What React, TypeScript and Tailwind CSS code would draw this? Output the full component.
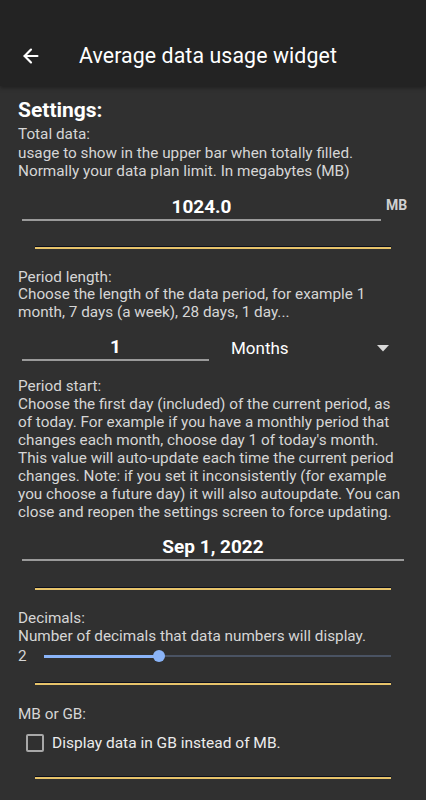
import { ArrowLeft } from "lucide-react";

function Divider() {
    return <div className="mx-[17px] h-[3px] border-t border-[#0b0f1e] bg-[#e6c36a]"></div>;
}

export default function App() {
    return (
        <div className="w-[426px] h-[800px] overflow-hidden bg-[#303030] text-[#d6d6d6] font-[Roboto,sans-serif]">
            {/* Top bar */}
            <header className="h-[86px] bg-[#232323] flex items-center pt-[26px] shadow-[0_2px_4px_rgba(0,0,0,0.35)]">
                <ArrowLeft className="ml-[20px] w-[22px] h-[22px] text-white" strokeWidth={2.4} />
                <h1 className="ml-[37px] text-[21.3px] text-white tracking-[0.1px]">Average data usage widget</h1>
            </header>

            <main className="px-[18px]">
                <h2 className="mt-[11px] text-[21px] leading-[26px] font-bold text-white">Settings:</h2>

                {/* Total data */}
                <p className="mt-[2px] text-[15.3px] leading-[18.5px]">
                    Total data:<br />
                    usage to show in the upper bar when totally filled.<br />
                    Normally your data plan limit. In megabytes (MB)
                </p>
                <div className="mt-[13px] flex items-center">
                    <div className="ml-[4px] w-[359px] border-b-2 border-[#9a9a9a] text-center text-[19px] leading-[25px] font-bold text-white">
                        1024.0
                    </div>
                    <span className="ml-[5px] -mt-[3px] text-[14px] font-bold text-[#cfcfcf]">MB</span>
                </div>
                <div className="mt-[25px]"><Divider /></div>

                {/* Period length */}
                <p className="mt-[20px] text-[15.3px] leading-[17.5px]">
                    Period length:<br />
                    Choose the length of the data period, for example 1<br />
                    month, 7 days (a week), 28 days, 1 day...
                </p>
                <div className="mt-[13px] flex items-end">
                    <div className="ml-[4px] w-[187px] border-b-2 border-[#9a9a9a] text-center text-[19px] leading-[25px] font-bold text-white">
                        1
                    </div>
                    <div className="ml-[22px] flex-1 flex items-center justify-between pb-[1px]">
                        <span className="text-[17px] leading-[24px] text-white">Months</span>
                        <svg width="12" height="7" viewBox="0 0 12 7" className="mr-[19px]">
                            <path d="M0 0 L12 0 L6 6.5 Z" fill="#d8d8d8" />
                        </svg>
                    </div>
                </div>

                {/* Period start */}
                <p className="mt-[16px] text-[15.3px] leading-[18px]">
                    Period start:<br />
                    Choose the first day (included) of the current period, as<br />
                    of today. For example if you have a monthly period that<br />
                    changes each month, choose day 1 of today's month.<br />
                    This value will auto-update each time the current period<br />
                    changes. Note: if you set it inconsistently (for example<br />
                    you choose a future day) it will also autoupdate. You can<br />
                    close and reopen the settings screen to force updating.
                </p>
                <div className="mt-[13px] ml-[4px] mr-[4px] border-b-2 border-[#9a9a9a] text-center text-[19px] leading-[25px] font-bold text-white">
                    Sep 1, 2022
                </div>
                <div className="mt-[26px]"><Divider /></div>

                {/* Decimals */}
                <p className="mt-[19px] text-[15.3px] leading-[18px]">
                    Decimals:<br />
                    Number of decimals that data numbers will display.
                </p>
                <div className="flex items-center h-[22px]">
                    <span className="w-[26px] text-[15.3px]">2</span>
                    <div className="relative flex-1 mr-[17px] h-[3px] flex">
                        <div className="w-[115px] h-[3px] bg-[#8ab4f8]"></div>
                        <div className="flex-1 h-[2px] mt-[0.5px] bg-[#4a5363]"></div>
                        <div className="absolute left-[109px] -top-[4.5px] w-[12px] h-[12px] rounded-full bg-[#8ab4f8]"></div>
                    </div>
                </div>
                <div className="mt-[15px]"><Divider /></div>

                {/* MB or GB */}
                <p className="mt-[20px] text-[15.3px] leading-[18px]">MB or GB:</p>
                <label className="mt-[10px] flex items-center">
                    <span className="ml-[8px] w-[18px] h-[18px] rounded-[2px] border-2 border-[#a8a8a8]"></span>
                    <span className="ml-[8px] text-[15.5px] leading-[20px] text-[#ececec]">Display data in GB instead of MB.</span>
                </label>
                <div className="mt-[23px]"><Divider /></div>
            </main>
        </div>
    );
}
